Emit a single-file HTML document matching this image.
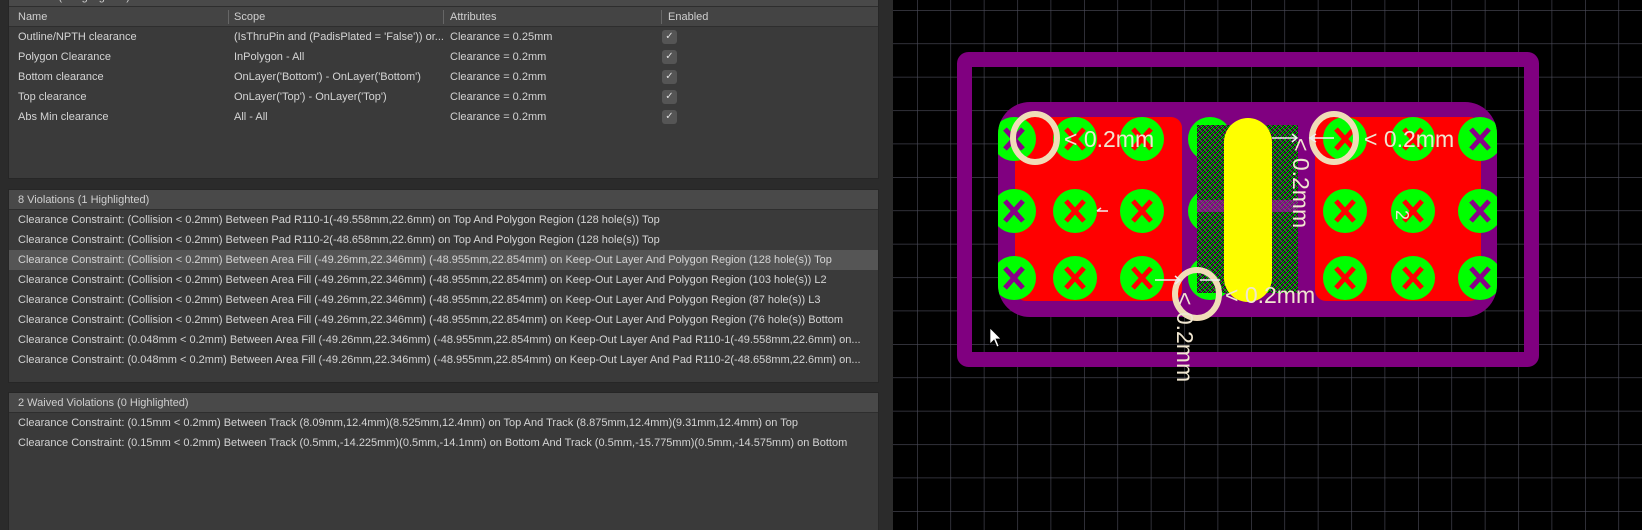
<!DOCTYPE html>
<html style="overflow:hidden;width:1642px;height:530px"><head><meta charset="utf-8"><style>
*{margin:0;padding:0;box-sizing:border-box}
body{width:1642px;height:530px;overflow:hidden;background:#2b2b2b;font-family:"Liberation Sans",sans-serif;font-size:11px;color:#d4d4d4;position:relative}
.panel{position:absolute;left:8px;width:871px;background:#3a3a3a;border:1px solid #262626;overflow:hidden}
.hd{height:20px;background:#494949;line-height:20px;padding-left:9px;color:#cfcfcf;border-bottom:1px solid #2e2e2e}
.row{height:20px;line-height:20px;padding-left:9px;white-space:nowrap;position:relative}
.hl{background:#555}
.c{position:absolute;top:0}
.cb{position:absolute;left:653px;top:3px;width:15px;height:14px;background:#555;border-radius:3px;color:#ddd;font-size:10px;line-height:14px;text-align:center}
.sep{position:absolute;top:3px;width:1px;height:14px;background:#666}
</style></head><body>
<div class="panel" style="top:-14px;height:193px">
 <div class="hd">2 Rules (0 Highlighted)</div>
 <div class="hd" style="background:#444;position:relative">Name<span class="sep" style="left:219px"></span><span class="c" style="left:225px">Scope</span><span class="sep" style="left:434px"></span><span class="c" style="left:441px">Attributes</span><span class="sep" style="left:652px"></span><span class="c" style="left:659px">Enabled</span></div>
 <div class="row">Outline/NPTH clearance<span class="c" style="left:225px">(IsThruPin and (PadisPlated = 'False')) or...</span><span class="c" style="left:441px">Clearance = 0.25mm</span><span class="cb">✓</span></div>
 <div class="row">Polygon Clearance<span class="c" style="left:225px">InPolygon - All</span><span class="c" style="left:441px">Clearance = 0.2mm</span><span class="cb">✓</span></div>
 <div class="row">Bottom clearance<span class="c" style="left:225px">OnLayer('Bottom') - OnLayer('Bottom')</span><span class="c" style="left:441px">Clearance = 0.2mm</span><span class="cb">✓</span></div>
 <div class="row">Top clearance<span class="c" style="left:225px">OnLayer('Top') - OnLayer('Top')</span><span class="c" style="left:441px">Clearance = 0.2mm</span><span class="cb">✓</span></div>
 <div class="row">Abs Min clearance<span class="c" style="left:225px">All - All</span><span class="c" style="left:441px">Clearance = 0.2mm</span><span class="cb">✓</span></div>
</div>
<div class="panel" style="top:189px;height:194px">
 <div class="hd">8 Violations (1 Highlighted)</div>
 <div class="row">Clearance Constraint: (Collision &lt; 0.2mm) Between Pad R110-1(-49.558mm,22.6mm) on Top And Polygon Region (128 hole(s)) Top</div>
 <div class="row">Clearance Constraint: (Collision &lt; 0.2mm) Between Pad R110-2(-48.658mm,22.6mm) on Top And Polygon Region (128 hole(s)) Top</div>
 <div class="row hl">Clearance Constraint: (Collision &lt; 0.2mm) Between Area Fill (-49.26mm,22.346mm) (-48.955mm,22.854mm) on Keep-Out Layer And Polygon Region (128 hole(s)) Top</div>
 <div class="row">Clearance Constraint: (Collision &lt; 0.2mm) Between Area Fill (-49.26mm,22.346mm) (-48.955mm,22.854mm) on Keep-Out Layer And Polygon Region (103 hole(s)) L2</div>
 <div class="row">Clearance Constraint: (Collision &lt; 0.2mm) Between Area Fill (-49.26mm,22.346mm) (-48.955mm,22.854mm) on Keep-Out Layer And Polygon Region (87 hole(s)) L3</div>
 <div class="row">Clearance Constraint: (Collision &lt; 0.2mm) Between Area Fill (-49.26mm,22.346mm) (-48.955mm,22.854mm) on Keep-Out Layer And Polygon Region (76 hole(s)) Bottom</div>
 <div class="row">Clearance Constraint: (0.048mm &lt; 0.2mm) Between Area Fill (-49.26mm,22.346mm) (-48.955mm,22.854mm) on Keep-Out Layer And Pad R110-1(-49.558mm,22.6mm) on...</div>
 <div class="row">Clearance Constraint: (0.048mm &lt; 0.2mm) Between Area Fill (-49.26mm,22.346mm) (-48.955mm,22.854mm) on Keep-Out Layer And Pad R110-2(-48.658mm,22.6mm) on...</div>
</div>
<div class="panel" style="top:392px;height:140px">
 <div class="hd">2 Waived Violations (0 Highlighted)</div>
 <div class="row">Clearance Constraint: (0.15mm &lt; 0.2mm) Between Track (8.09mm,12.4mm)(8.525mm,12.4mm) on Top And Track (8.875mm,12.4mm)(9.31mm,12.4mm) on Top</div>
 <div class="row">Clearance Constraint: (0.15mm &lt; 0.2mm) Between Track (0.5mm,-14.225mm)(0.5mm,-14.1mm) on Bottom And Track (0.5mm,-15.775mm)(0.5mm,-14.575mm) on Bottom</div>
</div>
<svg style="position:absolute;left:893px;top:0;display:block" width="749" height="530" viewBox="893 0 749 530" font-family="Liberation Sans, sans-serif">
<defs>
<pattern id="g" x="917" y="10" width="33.4" height="33.4" patternUnits="userSpaceOnUse"><path d="M0 0H33.4M0 0V33.4" stroke="#4c4c5a" stroke-width="1.2" fill="none"/></pattern>
<pattern id="h" width="5" height="5" patternUnits="userSpaceOnUse"><rect width="5" height="5" fill="#000"/><path d="M0 0L5 5M5 0L0 5" stroke="#0c0" stroke-width="0.9"/><path d="M0 2.5L2.5 0M2.5 5L5 2.5" stroke="#c0c" stroke-width="0.6"/></pattern>
<clipPath id="body"><rect x="998" y="102" width="499" height="215" rx="32"/></clipPath>
<g id="v"><circle r="22" fill="#0f0"/><path d="M-9 -10L9 10M9 -10L-9 10" stroke="#f00" stroke-width="5"/></g>
<g id="ve"><circle r="22" fill="#0f0"/><path d="M-9 -10L9 10M9 -10L-9 10" stroke="#808" stroke-width="5"/></g>
</defs>
<rect x="893" y="0" width="749" height="530" fill="#000"/>
<rect x="893" y="0" width="749" height="530" fill="url(#g)"/>
<rect x="964.5" y="59.5" width="567" height="300" rx="4" fill="none" stroke="#800080" stroke-width="15"/>
<rect x="998" y="102" width="499" height="215" rx="32" fill="#800080"/>
<rect x="1015" y="117" width="167" height="184" rx="11" fill="#f00"/>
<rect x="1315" y="117" width="166" height="184" rx="11" fill="#f00"/>
<g clip-path="url(#body)">
<use href="#ve" x="1014" y="139"/><use href="#ve" x="1014" y="211"/><use href="#ve" x="1014" y="278"/>
<use href="#v" x="1075" y="139"/><use href="#v" x="1075" y="211"/><use href="#v" x="1075" y="278"/>
<use href="#v" x="1142" y="139"/><use href="#v" x="1142" y="211"/><use href="#v" x="1142" y="278"/>
<use href="#v" x="1210" y="139"/><use href="#v" x="1210" y="211"/><use href="#v" x="1210" y="278"/>
<use href="#v" x="1345" y="139"/><use href="#v" x="1345" y="211"/><use href="#v" x="1345" y="278"/>
<use href="#v" x="1413" y="139"/><use href="#v" x="1413" y="211"/><use href="#v" x="1413" y="278"/>
<use href="#ve" x="1480" y="139"/><use href="#ve" x="1480" y="211"/><use href="#ve" x="1480" y="278"/>
</g>
<rect x="1197" y="125" width="101" height="168" fill="url(#h)"/>
<rect x="1197" y="200" width="101" height="12" fill="#c0c" opacity="0.5"/>
<rect x="1224" y="118" width="48" height="184" rx="24" fill="#ff0"/>
<g fill="none" stroke="#f0dcb8" stroke-width="6">
<ellipse cx="1035" cy="138" rx="22" ry="24"/>
<ellipse cx="1334" cy="138" rx="22" ry="24"/>
<ellipse cx="1197" cy="294" rx="22" ry="24"/>
</g>
<g stroke="#f0f0f0" stroke-width="1.5" fill="none">
<path d="M1272 138H1297M1292 134L1297 138L1292 142"/>
<path d="M1310 138H1334M1316 134L1310 138L1316 142"/>
<path d="M1097 211H1108M1097 211L1101 208"/>
<path d="M1155 280H1180M1175 276L1180 280L1175 284"/>
<path d="M1200 280H1220"/>
</g>
<g fill="#f0e6d0" font-size="23px">
<text x="1064" y="147">&lt; 0.2mm</text>
<text x="1364" y="147">&lt; 0.2mm</text>
<text x="1225" y="303">&lt; 0.2mm</text>
<text transform="translate(1293,138) rotate(90)">&lt; 0.2mm</text>
<text transform="translate(1177,292) rotate(90)">&lt; 0.2mm</text>
<text font-size="18px" transform="translate(1396,210) rotate(90)">2</text>
</g>
<path d="M990 328V344L994 340L997 347L999 346L996 339H1001Z" fill="#fff" stroke="#000" stroke-width="0.7"/>
</svg>
</body></html>
